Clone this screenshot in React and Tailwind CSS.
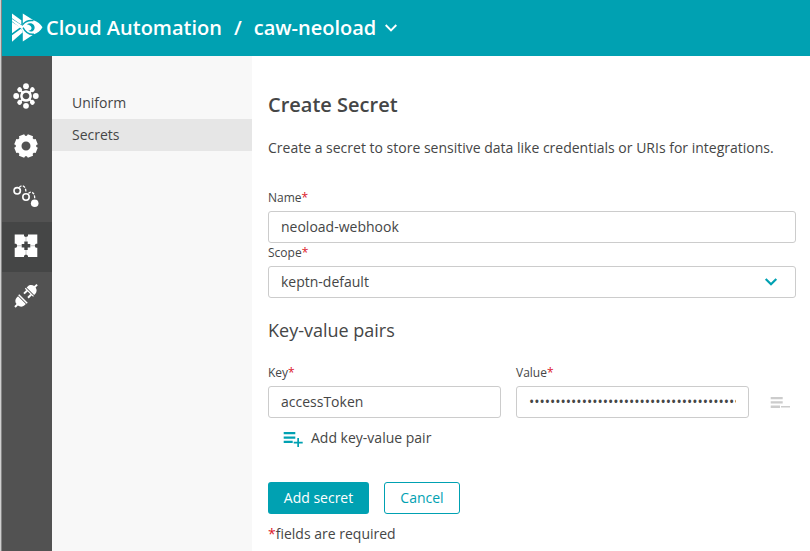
const border = 'border border-[#ccc] rounded-[3px] bg-white h-8';

function Label({ children }) {
  return (
    <div className="text-[12px] leading-[18px]">
      {children}
      <span className="text-[#dc172a]">*</span>
    </div>
  );
}

function Logo() {
  return (
    <svg width="31" height="30" viewBox="0 0 31 30">
      <g fill="#fff">
        <path d="M0 .6 9.300 7.200v4.600L0 5.300z" />
        <path d="M0 9l8.300 5.300L0 20.300z" />
        <path d="M0 22.300l9.300-6.700 1.500 3.700L0 28.700z" />
        <path d="M10.800.5 21.500 7.200C25.500 8.500 28.500 11 30.500 14.300c-2 3.500-5 6-9 7.200L10.800 28.500v-8.700L9.700 16 0 8.300V6.100L10.800 13z" />
      </g>
      <g fill="none" stroke="#00a1b2">
        <path d="M10.800 11.500C13.500 8 17 7 21.500 7.600" strokeWidth="1.400" />
        <path d="M11 14.600C13.500 19.500 17 21.800 22 21.200" strokeWidth="1.400" />
      </g>
      <path d="M14.800 11.300c2.500-1.500 5.600-1.200 7 .6 1.700 2.300.8 5.800-2.100 6.600-1.300.3-2.500 0-3.400-.7 2.300-.3 3.500-1.500 3.200-3.100-.3-1.800-2.200-2.900-4.700-3.400z" fill="#00a1b2" />
    </svg>
  );
}

function Hub() {
  const nodes = [0, 45, 90, 135, 180, 225, 270, 315];
  return (
    <svg width="26" height="26" viewBox="-13 -13 26 26" fill="#fff">
      <circle r="4.600" fill="none" stroke="#fff" strokeWidth="2.500" />
      {nodes.map((a) => (
        <g key={a} transform={`rotate(${a})`}>
          <circle cy={a % 90 ? -9 : -9.8} r={a % 90 ? 2.4 : 2.9} />
          {a % 90 !== 0 && <path d="M-1-9h2v4h-2z" />}
        </g>
      ))}
    </svg>
  );
}

function Gear() {
  return (
    <svg width="24" height="24" viewBox="-12 -12 24 24">
      <circle r="7.400" fill="none" stroke="#fff" strokeWidth="5.800" />
      {[22.5, 67.5, 112.5, 157.5, 202.5, 247.5, 292.5, 337.5].map((a) => (
        <path key={a} transform={`rotate(${a})`} fill="#fff" d="M-3.300-9-2.800-11.600h5.600l.5 2.600z" />
      ))}
    </svg>
  );
}

function Sequence() {
  return (
    <svg width="28" height="24" viewBox="0 0 28 24" fill="none" stroke="#fff">
      <circle cx="5.200" cy="6.800" r="3.200" strokeWidth="1.600" />
      <circle cx="14" cy="13" r="3.200" strokeWidth="1.600" />
      <circle cx="22.700" cy="19.200" r="3.800" fill="#fff" stroke="none" />
      <path d="M7.200 3.500C9 .8 14 .8 13.900 8.500M16.500 9.500c2-2.700 6.400-2 6.200 5.500" strokeWidth="1.300" strokeDasharray="2.800 1.300" />
    </svg>
  );
}

function Puzzle() {
  return (
    <svg width="24" height="24" viewBox="0 0 24 24" fill="#fff" fillRule="evenodd">
      <path d="M.7.500H10v1.200c.8 1.600 3.200 1.600 4 0V.5H23.300v9.300h-1.200c-1.600.7-1.600 3.300 0 4h1.200v9.300H14v-1.200c-.8-1.600-3.200-1.600-4 0v1.200H.7v-9.300h1.200c1.600-.7 1.600-3.300 0-4H.7zM10.300 7.500v2.600H7.700v3.400h2.600v2.600h3.400v-2.600h2.600v-3.400h-2.600V7.500z" />
      <path d="M11.500 1.500h1v6h-1zM11.500 16h1v6h-1zM1.500 11.300h6v1h-6zM16.500 11.300h6v1h-6z" fill="#454646" opacity=".3" />
    </svg>
  );
}

function Plug() {
  return (
    <svg width="26" height="26" viewBox="0 0 26 26" fill="#fff">
      <g transform="translate(18.800 6.900) rotate(45)">
        <path d="M-5.300 2v-1.500C-5.300-2-3.500-4-1-4.400V-7.500h2v3.100C3.500-4 5.300-2 5.300.5V2zM-5.800 2.800H5.800v1.200H-5.800zM-3.800 4h1.900v4.200h-1.900zM1.900 4h1.900v4.200H1.900z" />
      </g>
      <g transform="translate(7.300 18.700) rotate(225)">
        <path d="M-5.500 2.300v-1.800C-5.500-2-3.700-4-1-4.400V-7.500h2v3.100C3.700-4 5.500-2 5.500.5v1.800zM-6 3H6v1.500H-6z" />
      </g>
    </svg>
  );
}

function Chevron({ className, width }) {
  return (
    <svg className={className} width="14" height="10" viewBox="0 0 14 10" fill="none" stroke="currentColor" strokeWidth={width}>
      <path d="m1.700 2 5.300 5.300L12.300 2" />
    </svg>
  );
}

const railIcons = [Hub, Gear, Sequence, Puzzle, Plug];

export default function App() {
  return (
    <div className="flex h-[551px] w-[810px] overflow-hidden bg-white font-['Open_Sans','Noto_Sans',sans-serif] text-[14px] leading-5 text-[#454646]">
      <div className="w-0.5 shrink-0 border-r border-[#858585] bg-[#d0d0d0]" />
      <div className="flex min-w-0 flex-1 flex-col">
        <header className="flex h-14 shrink-0 items-center whitespace-nowrap bg-[#00a1b2] pl-[10px] text-[20px] font-semibold leading-7 text-white">
          <Logo />
          <span className="ml-[3px]">Cloud Automation</span>
          <span className="ml-3">/</span>
          <span className="ml-3">caw-neoload</span>
          <Chevron className="ml-2" width="1.900" />
        </header>
        <div className="flex min-h-0 flex-1">
          <nav className="flex w-[50px] shrink-0 flex-col bg-[#525252] pt-4">
            {railIcons.map((Icon, i) => (
              <div key={i} className={`flex h-[50px] items-center justify-center pb-[2px] pr-[2px] ${i === 3 ? 'bg-[#454646]' : ''}`}>
                <Icon />
              </div>
            ))}
          </nav>
          <aside className="w-[200px] shrink-0 bg-[#f8f8f8] pt-[31px]">
            <div className="flex h-8 items-center pl-5">Uniform</div>
            <div className="flex h-8 items-center bg-[#e6e6e6] pl-5">Secrets</div>
          </aside>
          <main className="flex min-w-0 flex-1 flex-col pl-4 pr-[14px] pt-[35px]">
            <h1 className="text-[20px] font-semibold leading-7">Create Secret</h1>
            <p className="mt-[19px] whitespace-nowrap">Create a secret to store sensitive data like credentials or URIs for integrations.</p>
            <div className="mt-[31px]"><Label>Name</Label></div>
            <div className={`${border} mt-[4px] flex items-center px-3`}>neoload-webhook</div>
            <div className="mt-px"><Label>Scope</Label></div>
            <div className={`${border} mt-[4px] flex items-center justify-between pl-3 pr-[17px]`}>
              keptn-default
              <Chevron className="text-[#00a1b2]" width="2.200" />
            </div>
            <h2 className="mt-5 text-[18px] leading-6">Key-value pairs</h2>
            <div className="mt-[22px] flex">
              <div className="w-[233px]">
                <Label>Key</Label>
                <div className={`${border} mt-[4px] flex items-center px-3`}>accessToken</div>
              </div>
              <div className="ml-[15px] w-[233px]">
                <Label>Value</Label>
                <div className={`${border} mt-[4px] flex items-center px-3`}>
                  <span className="overflow-hidden whitespace-nowrap">••••••••••••••••••••••••••••••••••••••••</span>
                </div>
              </div>
              <svg className="ml-[21px] mt-[32px]" width="21" height="14" viewBox="0 0 21 14" fill="#ccc">
                <path d="M.7 1h12v2.300h-12zM.7 5.300h12v2.300h-12zM.7 9.600h9.300v2.400H.7zM11 10h9v1.600h-9z" />
              </svg>
            </div>
            <div className="mt-[10px] flex items-center pl-[15px]">
              <svg width="21" height="18" viewBox="0 0 21 18" fill="#00a1b2">
                <path d="M.7 3h11.600v2.300H.7zM.7 7.400h11.600v2.300H.7zM.7 11.800h9v2.300h-9zM14.300 9h1.700v3.700h3.700v1.700H16V18h-1.700v-3.600h-3.600v-1.700h3.600z" />
              </svg>
              <span className="ml-[7px]">Add key-value pair</span>
            </div>
            <div className="mt-[34px] flex gap-[15px]">
              <button className="h-8 w-[101px] rounded-[3px] bg-[#00a1b2] text-white">Add secret</button>
              <button className="h-8 w-[76px] rounded-[3px] border border-[#00a1b2] bg-white text-[#00a1b2]">Cancel</button>
            </div>
            <div className="mt-[10px]"><span className="text-[#dc172a]">*</span>fields are required</div>
          </main>
        </div>
      </div>
    </div>
  );
}
